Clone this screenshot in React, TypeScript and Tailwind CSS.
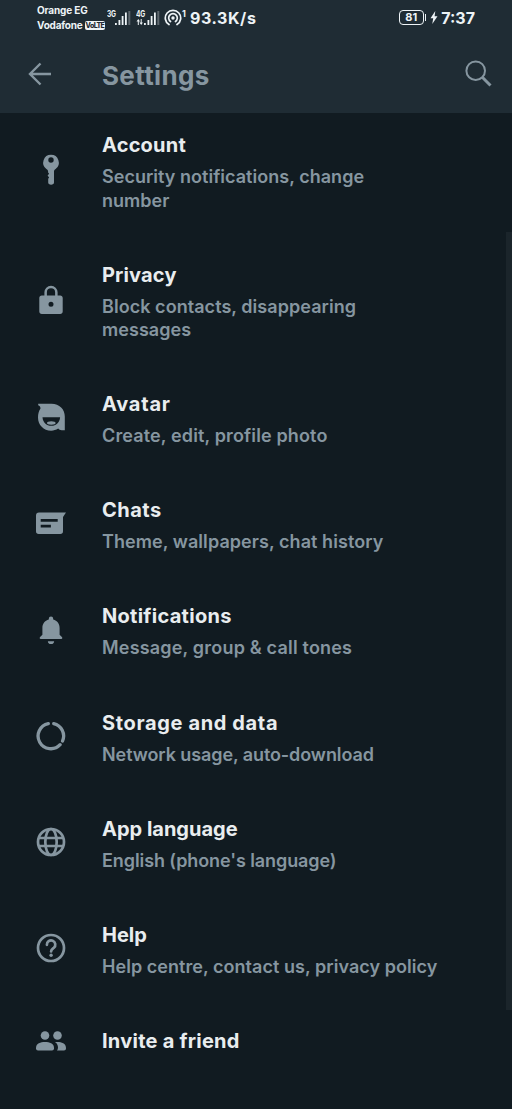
import type { ReactNode } from "react";

type IconProps = { children: ReactNode };

// Every list icon is drawn on a 32px grid, centred on 16,16
function Icon({ children }: IconProps) {
  return (
    <svg width="32" height="32" viewBox="0 0 32 32" fill="currentColor" className="shrink-0">
      {children}
    </svg>
  );
}

const icons = {
  key: (
    <Icon>
      <path
        fillRule="evenodd"
        d="M16 .8a7.800 7.800 0 0 0-4.600 14.100c1 .7 1.700 1.300 1.700 2.500v1.200l1 1.200-1.500 1.800 1.500 1.800-.9 1.300v3.800c0 1.300 1.200 2.200 2.900 2.200s2.900-.9 2.900-2.200V17.400c0-1.200.7-1.800 1.600-2.500A7.800 7.800 0 0 0 16 .8Zm0 2.500a2.700 2.700 0 1 1 0 5.400 2.700 2.700 0 0 1 0-5.400Z"
      />
    </Icon>
  ),
  lock: (
    <Icon>
      <path
        fillRule="evenodd"
        d="M9.400 11.500V8.300a6.600 6.600 0 0 1 13.200 0v3.200h2.600c1.500 0 2.500 1 2.500 2.500V27.500c0 1.500-1 2.500-2.500 2.500H6.800c-1.500 0-2.500-1-2.500-2.500V14c0-1.500 1-2.500 2.500-2.500Zm2.500 0h8.200V8.300a4.100 4.100 0 0 0-8.200 0ZM16 17.700a2.500 2.500 0 1 0 0 5 2.500 2.500 0 0 0 0-5Z"
      />
    </Icon>
  ),
  avatar: (
    <Icon>
      <path
        fillRule="evenodd"
        d="M3.200 2.800H16.500C24.500 2.800 29.800 8.500 29.800 15.500V29.300H26.700C25 29.300 24.200 28.600 23.200 27.600 21 29 18.700 29.700 16.200 29.700 8.500 29.700 3 23.900 3 16.500 3 13 3.700 9.800 5.500 7.400 5.500 5.500 4.400 4.800 3.200 4.300ZM7.500 16.200C7.900 21.500 11.500 24.800 16.300 24.800S24.700 21.500 25.100 16.200Z"
      />
      <ellipse cx="16.3" cy="22" rx="4.3" ry="1.7" />
    </Icon>
  ),
  chats: (
    <Icon>
      <path
        fillRule="evenodd"
        d="M4 5.400H31L28 10V24.200a2.700 2.700 0 0 1-2.700 2.700H3.700A2.700 2.700 0 0 1 1 24.200V8.400a3 3 0 0 1 3-3ZM5.700 12v2.700h17V12Zm0 5.800v2.700h10.200v-2.700Z"
      />
    </Icon>
  ),
  bell: (
    <Icon>
      <path d="M16 2.500a2.200 2.200 0 0 1 2.200 2.200v.8c4 1 6.400 4.200 6.400 8.400v6.800l2.300 2.300c.8.9.5 2-.6 2H5.700c-1.100 0-1.400-1.100-.6-2l2.300-2.300v-6.800c0-4.200 2.400-7.400 6.400-8.400v-.8A2.200 2.200 0 0 1 16 2.500Z" />
      <path d="M12.900 27.200h6.200a3.100 2.800 0 0 1-6.200 0Z" />
    </Icon>
  ),
  storage: (
    <Icon>
      <g fill="none" stroke="currentColor" strokeWidth="3.3" strokeLinecap="round">
        <path d="M18.700 3.600A12.700 12.700 0 0 1 27.500 21.100" />
        <path d="M25.100 24.700A12.700 12.700 0 1 1 13.300 3.600" />
      </g>
    </Icon>
  ),
  globe: (
    <Icon>
      <g fill="none" stroke="currentColor" strokeWidth="2.7">
        <circle cx="16" cy="16" r="13" />
        <ellipse cx="16" cy="16" rx="5.7" ry="13" />
        <path d="M4 12H28M4 20H28" />
      </g>
    </Icon>
  ),
  help: (
    <Icon>
      <g fill="none" stroke="currentColor" strokeWidth="2.7">
        <circle cx="16" cy="16" r="13" />
        <path
          d="M11.900 12.800a4.200 4.200 0 1 1 7 2.900C17.300 17 16.100 17.500 16.100 19.400"
          strokeLinecap="round"
        />
      </g>
      <circle cx="16.1" cy="23.3" r="1.7" />
    </Icon>
  ),
  people: (
    <Icon>
      <circle cx="10" cy="10.500" r="4.300" />
      <circle cx="22.5" cy="10.500" r="4.300" />
      <path d="M1 23c0-4.700 4.500-6 9-6s9 1.300 9 6v.5a2 2 0 0 1-2 2H3a2 2 0 0 1-2-2Z" />
      <path d="M19.900 17c2.200 1.300 3.100 3.200 3.100 5.600 0 1.200-.4 2.200-1 2.900h7a2 2 0 0 0 2-2V23c0-4.700-4.500-6-8.500-6Z" />
    </Icon>
  ),
};

type Item = {
  icon: ReactNode;
  title: string;
  titleClass: string;
  lines: string[];
  textClass: string;
};

const items: Item[] = [
  {
    icon: icons.key,
    title: "Account",
    titleClass: "tracking-[0.2px]",
    lines: ["Security notifications, change", "number"],
    textClass: "tracking-[0.03px]",
  },
  {
    icon: icons.lock,
    title: "Privacy",
    titleClass: "tracking-[0.15px]",
    lines: ["Block contacts, disappearing", "messages"],
    textClass: "tracking-[0.05px]",
  },
  {
    icon: icons.avatar,
    title: "Avatar",
    titleClass: "tracking-[0.75px]",
    lines: ["Create, edit, profile photo"],
    textClass: "tracking-[0.14px]",
  },
  {
    icon: icons.chats,
    title: "Chats",
    titleClass: "tracking-[0.5px]",
    lines: ["Theme, wallpapers, chat history"],
    textClass: "tracking-[0.07px]",
  },
  {
    icon: icons.bell,
    title: "Notifications",
    titleClass: "tracking-[0.28px]",
    lines: ["Message, group & call tones"],
    textClass: "tracking-[0.19px]",
  },
  {
    icon: icons.storage,
    title: "Storage and data",
    titleClass: "tracking-[0.64px]",
    lines: ["Network usage, auto-download"],
    textClass: "tracking-[-0.09px]",
  },
  {
    icon: icons.globe,
    title: "App language",
    titleClass: "tracking-normal",
    lines: ["English (phone's language)"],
    textClass: "tracking-[-0.09px]",
  },
  {
    icon: icons.help,
    title: "Help",
    titleClass: "tracking-normal",
    lines: ["Help centre, contact us, privacy policy"],
    textClass: "tracking-[0.05px]",
  },
  {
    icon: icons.people,
    title: "Invite a friend",
    titleClass: "tracking-[0.25px]",
    lines: [],
    textClass: "",
  },
];

function Signal({ label, data }: { label: string; data?: boolean }) {
  return (
    <div className="relative h-4 w-6">
      <span className="absolute top-0 left-0 origin-left scale-x-[0.78] text-[8.5px] leading-none font-bold tracking-tighter">
        {label}
      </span>
      <svg width="24" height="16" viewBox="0 0 24 16" fill="currentColor">
        <path d="M8 13h1.800v2H8ZM11.500 10h1.800v5h-1.800ZM14.700 6h1.800v9h-1.800ZM18 2.500h1.800v12.500H18Z" />
        <path d="M21.300 1h2v14h-2Z" opacity=".3" />
        {data && <path d="M.5 11.500 2.300 9l1.700 2.500H2.800V15H1.800v-3.500ZM3.500 12.500h1.200V9h1v3.500h1.200L5.200 15Z" />}
      </svg>
    </div>
  );
}

function StatusBar() {
  return (
    <div className="flex h-[35px] items-center pr-[37px] pl-[37px] text-[#edf3f6]">
      <div className="w-[67px] text-[10px] leading-[15px] font-bold whitespace-nowrap">
        <div className="tracking-[-0.15px]">Orange EG</div>
        <div className="flex items-center gap-0.5">
          <span className="tracking-[-0.2px]">Vodafone</span>
          <span className="rounded-[2px] bg-[#edf3f6] px-px text-[7px] leading-[9px] font-extrabold tracking-[-0.6px] text-[#1f2c34]">
            VoLTE
          </span>
        </div>
      </div>
      <div className="ml-[3px] flex items-center gap-[5px]">
        <Signal label="3G" />
        <Signal label="4G" data />
      </div>
      <svg width="18" height="18" viewBox="0 0 18 18" className="ml-1" fill="none" stroke="currentColor" strokeWidth="1.7">
        <path d="M5 15.600a7.700 7.700 0 1 1 8 0M6.500 12.500a4.300 4.300 0 1 1 5 0" strokeLinecap="round" />
        <circle cx="9" cy="9" r="1.700" fill="currentColor" stroke="none" />
      </svg>
      <span className="-mt-2 text-[9px] font-bold">1</span>
      <span className="mt-px ml-[4px] text-[16px] font-bold tracking-[0.6px]">93.3K/s</span>
      <div className="ml-auto flex items-center">
        <div className="flex h-[15px] w-[25px] items-center justify-center rounded-[4px] border-[1.5px] border-current text-[11px] leading-none font-bold">
          81
        </div>
        <div className="ml-px h-[7px] w-[1.5px] bg-current" />
        <svg width="8" height="13" viewBox="0 0 8 13" className="mr-[3px] ml-[4px]" fill="currentColor">
          <path d="M5.300 0 .5 7.300h2.700L2.300 13 7.500 5.300H4.600Z" />
        </svg>
        <span className="text-[16px] font-bold">7:37</span>
      </div>
    </div>
  );
}

function AppBar() {
  return (
    <div className="flex h-[78px] items-center pr-[19px] pl-[28px] text-[#8696a0]">
      <svg width="24" height="24" viewBox="0 0 24 24" fill="none" stroke="currentColor" strokeWidth="2.4" className="-mt-px">
        <path d="M23 12H2.500M12.500 1.500 2 12l10.500 10.500" />
      </svg>
      <h1 className="mt-[3px] ml-[50px] text-[26px] leading-none font-bold tracking-[0.35px]">Settings</h1>
      <svg width="30" height="30" viewBox="0 0 30 30" fill="none" stroke="currentColor" className="ml-auto">
        <circle cx="12.7" cy="11.700" r="9.300" strokeWidth="2" />
        <path d="M19.300 18.300 27.500 26.500" strokeWidth="3" />
      </svg>
    </div>
  );
}

export default function App() {
  return (
    <div className="flex h-[1109px] w-[512px] flex-col overflow-hidden bg-[#111b21] font-['Inter','Liberation_Sans',sans-serif]">
      <header className="h-[113px] shrink-0 bg-[#1f2c34]">
        <StatusBar />
        <AppBar />
      </header>
      <div className="flex min-h-0 flex-1">
        <ul className="flex-1 pt-[19.4px]">
          {items.map((item) => (
            <li key={item.title} className="flex pb-[49.9px] pl-[35px]">
              <div className="flex items-center text-[#8696a0]">
                {/* Negative margins keep the icon from stretching a one-line row */}
                <div className={item.lines.length ? "-mt-1 flex" : "-my-1 flex"}>{item.icon}</div>
              </div>
              <div className="ml-[35px] whitespace-nowrap">
                <h2 className={`text-[20px] leading-[26px] font-bold text-[#e9edef] ${item.titleClass}`}>
                  {item.title}
                </h2>
                {item.lines.length > 0 && (
                  <p className={`mt-[7px] text-[18px] leading-[23.25px] font-semibold text-[#8696a0] ${item.textClass}`}>
                    {item.lines.map((line) => (
                      <span key={line} className="block">
                        {line}
                      </span>
                    ))}
                  </p>
                )}
              </div>
            </li>
          ))}
        </ul>
        {/* Scrollbar thumb */}
        <div className="mt-[119px] h-[778px] w-[6px] bg-[#1b252b]" />
      </div>
    </div>
  );
}
